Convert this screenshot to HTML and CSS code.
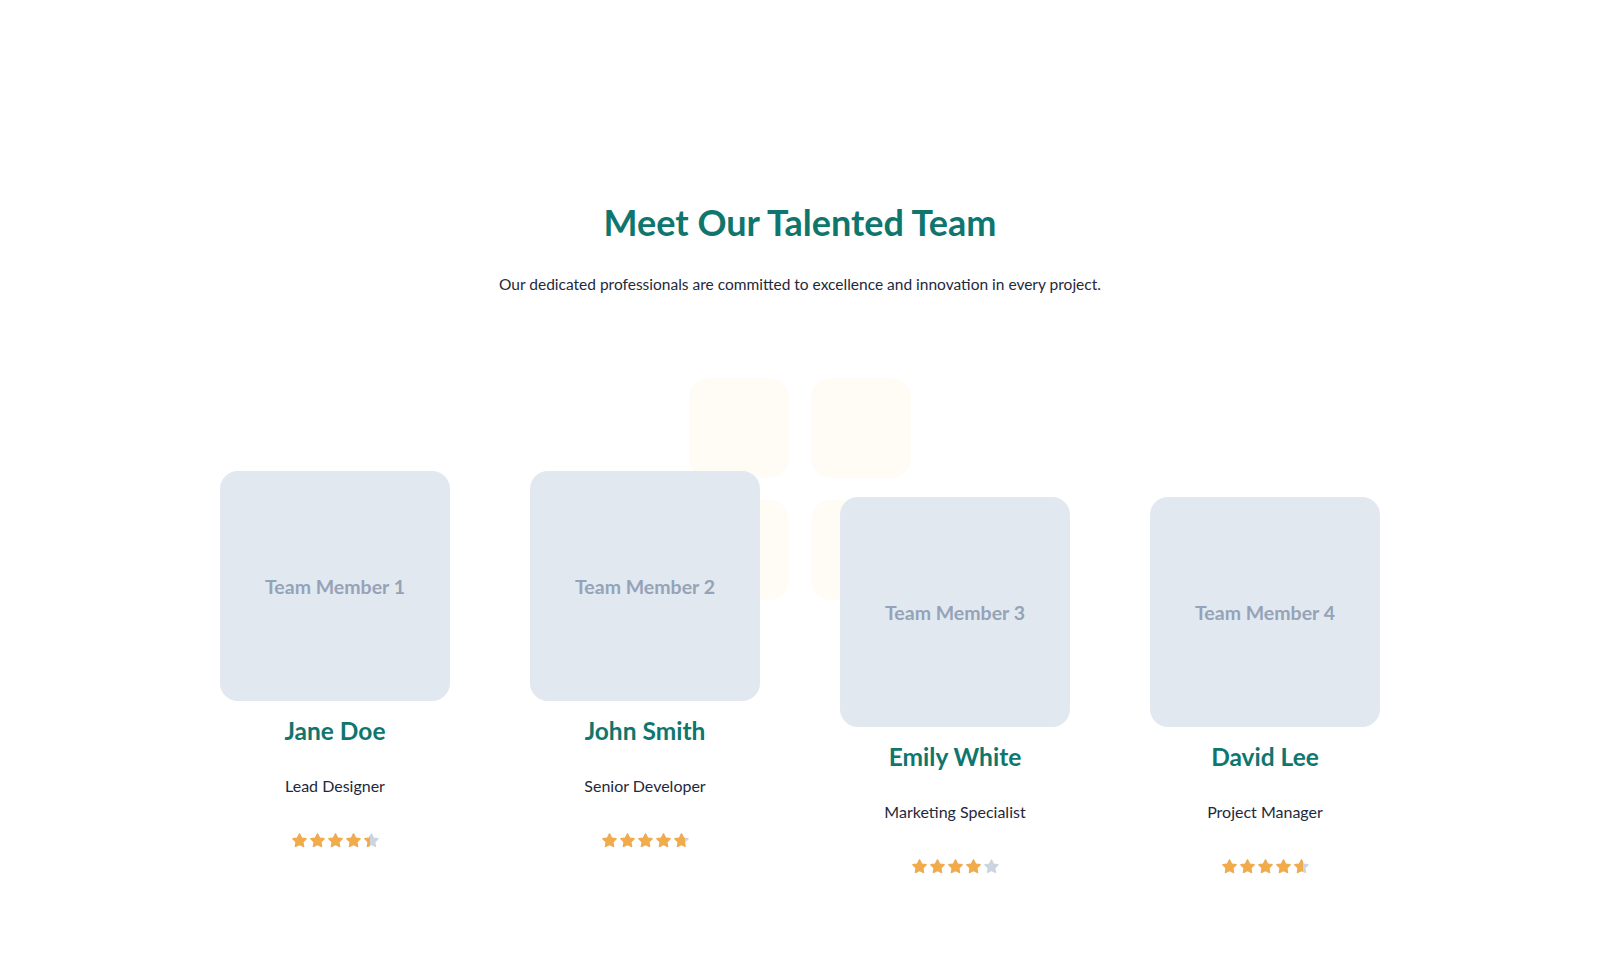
FILE: index.html
```html
<!DOCTYPE html>
<html lang="en">

<head>
    <meta charset="UTF-8">
    <meta name="viewport" content="width=device-width, initial-scale=1.0">
    <title>Meet Our Talented Team</title>
    <link rel="stylesheet" href="styles.css">
</head>

<body>
    <!-- star shape used by all ratings -->
    <svg class="sprite" aria-hidden="true">
        <symbol id="star" viewBox="0 0 24 24">
            <path d="M12 2.8l2.8 5.9 6.4.8-4.7 4.5 1.2 6.4L12 17.3l-5.7 3.1 1.2-6.4-4.7-4.5 6.4-.8z"
                stroke-width="2" stroke-linejoin="round" />
        </symbol>
    </svg>

    <section class="team">
        <h1 class="team-title">Meet Our Talented Team</h1>
        <p class="team-subtitle">Our dedicated professionals are committed to excellence and innovation in every project.</p>

        <div class="team-grid">
            <!-- decoracao de fundo -->
            <div class="decor">
                <span></span><span></span><span></span><span></span>
            </div>

            <div class="member">
                <div class="photo">Team Member 1</div>
                <h3 class="name">Jane Doe</h3>
                <p class="role">Lead Designer</p>
                <div class="stars">
                    <div class="stars-row base">
                        <svg><use href="#star"/></svg><svg><use href="#star"/></svg><svg><use href="#star"/></svg><svg><use href="#star"/></svg><svg><use href="#star"/></svg>
                    </div>
                    <div class="stars-fill" style="width: 89%">
                        <div class="stars-row">
                            <svg><use href="#star"/></svg><svg><use href="#star"/></svg><svg><use href="#star"/></svg><svg><use href="#star"/></svg><svg><use href="#star"/></svg>
                        </div>
                    </div>
                </div>
            </div>

            <div class="member">
                <div class="photo">Team Member 2</div>
                <h3 class="name">John Smith</h3>
                <p class="role">Senior Developer</p>
                <div class="stars">
                    <div class="stars-row base">
                        <svg><use href="#star"/></svg><svg><use href="#star"/></svg><svg><use href="#star"/></svg><svg><use href="#star"/></svg><svg><use href="#star"/></svg>
                    </div>
                    <div class="stars-fill" style="width: 95%">
                        <div class="stars-row">
                            <svg><use href="#star"/></svg><svg><use href="#star"/></svg><svg><use href="#star"/></svg><svg><use href="#star"/></svg><svg><use href="#star"/></svg>
                        </div>
                    </div>
                </div>
            </div>

            <div class="member offset">
                <div class="photo">Team Member 3</div>
                <h3 class="name">Emily White</h3>
                <p class="role">Marketing Specialist</p>
                <div class="stars">
                    <div class="stars-row base">
                        <svg><use href="#star"/></svg><svg><use href="#star"/></svg><svg><use href="#star"/></svg><svg><use href="#star"/></svg><svg><use href="#star"/></svg>
                    </div>
                    <div class="stars-fill" style="width: 83%">
                        <div class="stars-row">
                            <svg><use href="#star"/></svg><svg><use href="#star"/></svg><svg><use href="#star"/></svg><svg><use href="#star"/></svg><svg><use href="#star"/></svg>
                        </div>
                    </div>
                </div>
            </div>

            <div class="member offset">
                <div class="photo">Team Member 4</div>
                <h3 class="name">David Lee</h3>
                <p class="role">Project Manager</p>
                <div class="stars">
                    <div class="stars-row base">
                        <svg><use href="#star"/></svg><svg><use href="#star"/></svg><svg><use href="#star"/></svg><svg><use href="#star"/></svg><svg><use href="#star"/></svg>
                    </div>
                    <div class="stars-fill" style="width: 93%">
                        <div class="stars-row">
                            <svg><use href="#star"/></svg><svg><use href="#star"/></svg><svg><use href="#star"/></svg><svg><use href="#star"/></svg><svg><use href="#star"/></svg>
                        </div>
                    </div>
                </div>
            </div>
        </div>
    </section>
</body>

</html>
```

FILE: styles.css
```css
/* Reset */
* {
    margin: 0;
    padding: 0;
    box-sizing: border-box;
}

body {
    background-color: #fff;
    color: #1e293b;
    font-family: 'Lato', 'Noto Sans', sans-serif;
}

.sprite {
    display: none;
}

/* Secao da equipe */
.team {
    max-width: 1160px;
    margin: 0 auto;
    padding-top: 200px;
    text-align: center;
}

.team-title {
    font-size: 36px;
    line-height: 44px;
    font-weight: 700;
    color: #0f766e;
}

.team-subtitle {
    margin-top: 28px;
    font-size: 15.5px;
    line-height: 24px;
    color: #1e293b;
}

/* Grade de membros */
.team-grid {
    position: relative;
    display: grid;
    grid-template-columns: repeat(4, 1fr);
    gap: 80px;
    margin-top: 175px;
    padding-bottom: 100px;
}

.decor {
    position: absolute;
    top: -93px;
    left: calc(50% - 111px);
    display: grid;
    grid-template-columns: 100px 100px;
    gap: 22px;
    z-index: 0;
}

.decor span {
    width: 100px;
    height: 100px;
    border-radius: 20px;
    background-color: #fffcf5;
}

.member {
    position: relative;
    z-index: 1;
    display: flex;
    flex-direction: column;
    align-items: center;
}

.member.offset {
    margin-top: 26px;
}

.photo {
    width: 230px;
    height: 230px;
    border-radius: 18px;
    background-color: #e2e8f0;
    color: #94a3b8;
    font-size: 19.5px;
    font-weight: 700;
    display: flex;
    align-items: center;
    justify-content: center;
}

.name {
    margin-top: 16px;
    font-size: 24.5px;
    line-height: 28px;
    font-weight: 700;
    color: #0f766e;
}

.role {
    margin-top: 30px;
    font-size: 16px;
    line-height: 22px;
    color: #1e293b;
}

/* Avaliacao */
.stars {
    position: relative;
    margin-top: 35px;
    height: 18px;
}

.stars-row {
    display: flex;
    gap: 1px;
    fill: #f2ab4a;
    stroke: #f2ab4a;
}

.stars-row.base {
    fill: #cbd5e1;
    stroke: #cbd5e1;
}

.stars-row svg {
    width: 17px;
    height: 17px;
    flex-shrink: 0;
}

.stars-fill {
    position: absolute;
    top: 0;
    left: 0;
    overflow: hidden;
}
```
